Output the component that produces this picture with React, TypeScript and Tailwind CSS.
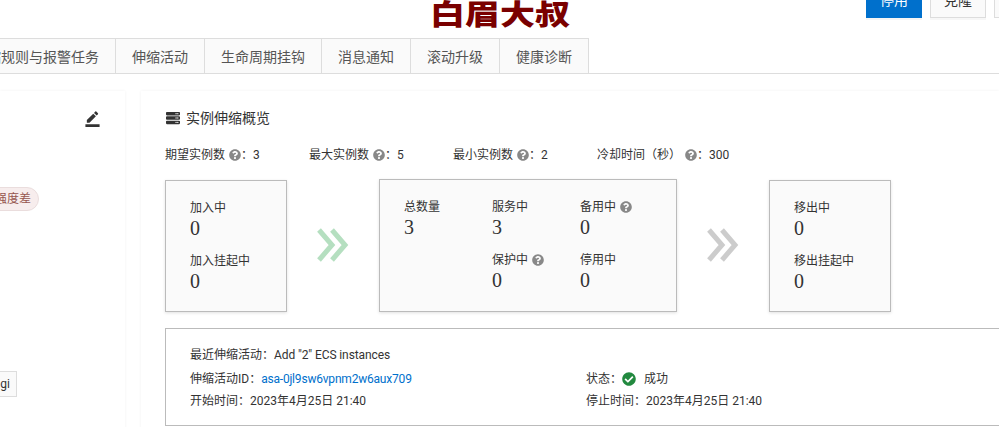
import { FaCheckCircle, FaQuestionCircle, FaServer } from "react-icons/fa";
import { MdBorderColor } from "react-icons/md";

const tabs = ["伸缩规则与报警任务", "伸缩活动", "生命周期挂钩", "消息通知", "滚动升级", "健康诊断"];

const limits = [
  { label: "期望实例数", value: "3" },
  { label: "最大实例数", value: "5" },
  { label: "最小实例数", value: "2" },
  { label: "冷却时间（秒）", value: "300" },
];

function Help() {
  return <FaQuestionCircle className="inline-block ml-[4px] text-[#888888] text-[12px] align-[-2px]" />;
}

function Stat({ label, value, help, className }: { label: string; value: string; help?: boolean; className?: string }) {
  return (
    <div className={className}>
      <div className="h-[18px] leading-[20px]">
        {label}
        {help && <Help />}
      </div>
      <div className="h-[24px] leading-[24px] text-[20px] font-['Liberation_Serif',serif]">{value}</div>
    </div>
  );
}

function Arrow({ color }: { color: string }) {
  return (
    <div className="w-[32px] mx-[30px] h-[132px] flex items-center shrink-0">
      <svg width="32" height="34" viewBox="0 0 32 34" fill="none" stroke={color} strokeWidth="5">
        <polyline points="2,2 15,17 2,32" />
        <polyline points="15,2 28,17 15,32" />
      </svg>
    </div>
  );
}

export default function App() {
  return (
    <div className="w-[999px] h-[427px] overflow-hidden bg-white text-[#333333] text-[12px] font-['Roboto','Noto_Sans_CJK_SC',sans-serif]">
      {/* header */}
      <div className="h-[38px] flex items-start">
        <div className="ml-[430px] h-[32px] leading-[32px] text-[35px] font-black text-[#7a0000] whitespace-nowrap scale-y-[0.8]">
          白眉大叔
        </div>
        <div className="ml-auto flex gap-[8px] -mr-[51px] shrink-0">
          <button className="w-[56px] h-[32px] -mt-[14px] pb-[3px] bg-[#0070cc] text-white text-[14px] shadow-[0_2px_0_#f5f5f5]">
            停用
          </button>
          <button className="w-[56px] h-[32px] -mt-[14px] pb-[3px] bg-[#fafafa] border border-[#dddddd] text-[14px] shadow-[0_2px_0_#f7f7f7]">
            克隆
          </button>
          <button className="w-[56px] h-[32px] -mt-[14px] bg-[#fafafa] border border-[#dddddd] text-[14px]" />
        </div>
      </div>

      {/* tabs */}
      <div className="h-[36px] border-b border-[#dddddd] flex">
        <div className="flex -ml-[43px]">
          {tabs.map((tab) => (
            <div
              key={tab}
              className="h-[36px] px-[16px] leading-[36px] text-[14px] text-[#555555] bg-[#fafafa] border border-[#dddddd] border-l-0 whitespace-nowrap"
            >
              {tab}
            </div>
          ))}
        </div>
      </div>

      <div className="flex gap-[16px] pt-[17px]">
        {/* left card, mostly cut off */}
        <div className="w-[125px] h-[400px] shrink-0 bg-white shadow-[0_0_3px_rgba(0,0,0,0.06)] pt-[19px]">
          <div className="flex justify-end pr-[24px]">
            <MdBorderColor className="text-[17px] text-[#333333]" />
          </div>
          <div className="mt-[60px] -ml-[24px] w-[63px] h-[24px] leading-[23px] text-right pr-[7px] rounded-full bg-[#f7eded] border border-[#eadddd] text-[#96564f]">
            强度差
          </div>
          <div className="mt-[160px] -ml-[30px] w-[47px] h-[26px] leading-[24px] text-right pr-[6px] bg-[#fafafa] border border-[#dddddd]">
            gi
          </div>
        </div>

        {/* overview card */}
        <div className="flex-1 min-w-0 h-[400px] overflow-hidden bg-white shadow-[0_0_3px_rgba(0,0,0,0.06)] pl-[24px] pt-[17px]">
          <div className="h-[20px] leading-[20px] flex items-center text-[14px]">
            <FaServer className="text-[14px] ml-[1px] mr-[6px] text-[#333333]" />
            实例伸缩概览
          </div>

          <div className="mt-[17px] h-[20px] leading-[20px] flex">
            {limits.map((item) => (
              <div key={item.label} className="w-[144px] shrink-0 whitespace-nowrap">
                {item.label}
                <Help />
                ：{item.value}
              </div>
            ))}
          </div>

          <div className="mt-[14px] flex items-start w-[800px]">
            <div className="w-[122px] h-[132px] mt-[1px] shrink-0 bg-[#fafafa] border border-[#bbbbbb] shadow-[0_1px_3px_rgba(0,0,0,0.12)] pl-[24px] pt-[17px]">
              <Stat label="加入中" value="0" />
              <Stat label="加入挂起中" value="0" className="mt-[11px]" />
            </div>
            <Arrow color="#b5dfc0" />
            <div className="w-[298px] h-[133px] shrink-0 bg-[#fafafa] border border-[#bbbbbb] shadow-[0_1px_3px_rgba(0,0,0,0.12)] pl-[24px] pt-[17px] grid grid-cols-[88px_88px_88px] gap-y-[11px] content-start">
              <Stat label="总数量" value="3" />
              <Stat label="服务中" value="3" />
              <Stat label="备用中" value="0" help />
              <div />
              <Stat label="保护中" value="0" help />
              <Stat label="停用中" value="0" />
            </div>
            <Arrow color="#cccccc" />
            <div className="w-[122px] h-[132px] mt-[1px] shrink-0 bg-[#fafafa] border border-[#bbbbbb] shadow-[0_1px_3px_rgba(0,0,0,0.12)] pl-[24px] pt-[17px]">
              <Stat label="移出中" value="0" />
              <Stat label="移出挂起中" value="0" className="mt-[11px]" />
            </div>
          </div>

          <div className="mt-[16px] w-[900px] h-[98px] border border-[#bbbbbb] pl-[24px] pt-[16px] leading-[20px]">
            <div className="h-[20px]">
              最近伸缩活动：<span className="tracking-[-0.1px]">Add "2" ECS instances</span>
            </div>
            <div className="mt-[4px] h-[20px] flex">
              <div className="w-[396px]">
                伸缩活动ID：<span className="text-[#0070cc] tracking-[-0.2px]">asa-0jl9sw6vpnm2w6aux709</span>
              </div>
              <div className="flex items-center">
                状态：
                <FaCheckCircle className="text-[14px] text-[#22893f]" />
                <span className="ml-[8px]">成功</span>
              </div>
            </div>
            <div className="mt-[2px] h-[20px] flex">
              <div className="w-[396px]">开始时间：2023年4月25日 21:40</div>
              <div>停止时间：2023年4月25日 21:40</div>
            </div>
          </div>
        </div>
      </div>
    </div>
  );
}
